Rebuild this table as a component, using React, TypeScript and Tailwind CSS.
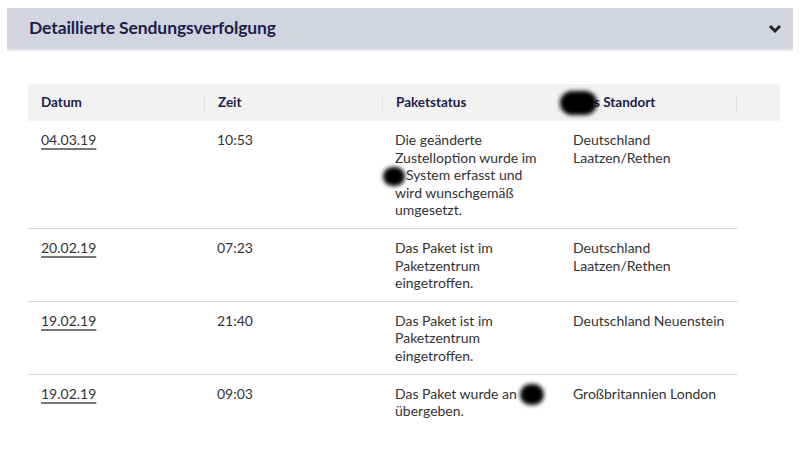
import React from 'react';

function Redacted({ className }: { className: string }) {
  return <span className={"inline-block rounded-full bg-black blur-[2px] align-middle " + className} />;
}

function Tracking() {
  const rows = [
    {
      datum: '04.03.19',
      zeit: '10:53',
      status: (
        <>
          Die geänderte Zustelloption wurde im <Redacted className="-my-[4px] -ml-[12px] mr-[1px] h-[19px] w-[22px]" />
          System erfasst und wird wunschgemäß umgesetzt.
        </>
      ),
      standort: 'Deutschland Laatzen/Rethen',
    },
    { datum: '20.02.19', zeit: '07:23', status: 'Das Paket ist im Paketzentrum eingetroffen.', standort: 'Deutschland Laatzen/Rethen' },
    { datum: '19.02.19', zeit: '21:40', status: 'Das Paket ist im Paketzentrum eingetroffen.', standort: 'Deutschland Neuenstein' },
    {
      datum: '19.02.19',
      zeit: '09:03',
      status: (
        <>
          Das Paket wurde an <Redacted className="-my-[5px] h-[21px] w-[24px]" /> übergeben.
        </>
      ),
      standort: 'Großbritannien London',
    },
  ];

  const headers = ['Datum', 'Zeit', 'Paketstatus'];

  return (
    <div className="min-h-[469px] bg-white px-[7px] pt-[8px] font-['Lato','Noto_Sans',sans-serif]">
      {/* Kopfzeile */}
      <div className="flex h-[43px] items-center justify-between border-b-2 border-[#e4e6ee] bg-[#d2d5e0] pl-[22px] pr-[11px]">
        <h2 className="text-[17.5px] font-bold tracking-[-0.1px] text-[#1b1e4b]">Detaillierte Sendungsverfolgung</h2>
        <svg width="14" height="10" viewBox="0 0 14 10">
          <polyline points="2,2 7,7 12,2" fill="none" stroke="#222" strokeWidth="3" />
        </svg>
      </div>

      <div className="ml-[21px] mt-[33px] w-[752px]">
        <div className="grid h-[37px] grid-cols-[177px_178px_176px_178px_43px] bg-[#f2f2f2] text-[13.5px] font-bold text-[#1b1e4b]">
          {headers.map((h) => (
            <div key={h} className="flex items-center justify-between pl-[13px]">
              <span>{h}</span>
              <span className="h-[18px] w-px bg-[#e2e2e2]" />
            </div>
          ))}
          <div className="flex items-center justify-between pl-[1px]">
            <span className="flex items-center">
              <Redacted className="h-[24px] w-[37px]" />
              <span className="-ml-[3px]">s Standort</span>
            </span>
            <span className="h-[18px] w-px bg-[#e2e2e2]" />
          </div>
          <div />
        </div>

        {rows.map((r, i) => (
          <div
            key={i}
            className={
              "grid w-[710px] grid-cols-[177px_178px_176px_179px] pb-[9px] pt-[10px] text-[14px] leading-[17.6px] text-[#333] " +
              (i < rows.length - 1 ? 'border-b border-[#d8d8d8]' : '')
            }
          >
            <div className="pl-[13px]">
              <span className="underline decoration-[#777] decoration-2 underline-offset-[3px]">{r.datum}</span>
            </div>
            <div className="pl-[12px]">{r.zeit}</div>
            <div className="pl-[12px] pr-[8px]">{r.status}</div>
            <div className="pl-[14px]">{r.standort}</div>
          </div>
        ))}
      </div>
    </div>
  );
}

export default function App() {
  return <Tracking />;
}
